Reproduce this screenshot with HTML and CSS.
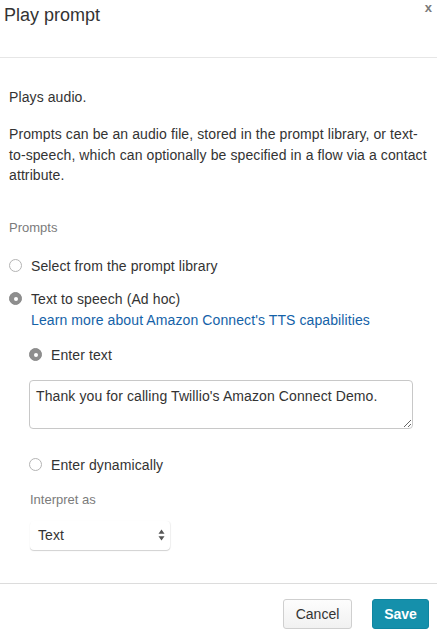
FILE: index.html
```html
<!DOCTYPE html>
<html>
<head>
<meta charset="utf-8">
<link rel="stylesheet" href="styles.css">
</head>
<body>
<div class="panel">
  <header class="header">
    <h1 class="title">Play prompt</h1>
    <span class="close">x</span>
  </header>
  <main class="content">
    <p class="lead">Plays audio.</p>
    <p class="desc">Prompts can be an audio file, stored in the prompt library, or text-to-speech, which can optionally be specified in a flow via a contact attribute.</p>
    <div class="label label-prompts">Prompts</div>
    <div class="radio-row row-library">
      <span class="radio"></span>
      <span class="radio-text">Select from the prompt library</span>
    </div>
    <div class="radio-row row-tts">
      <span class="radio checked"></span>
      <span class="radio-text">Text to speech (Ad hoc)</span>
    </div>
    <a class="link">Learn more about Amazon Connect's TTS capabilities</a>
    <div class="sub">
      <div class="radio-row row-enter">
        <span class="radio checked"></span>
        <span class="radio-text">Enter text</span>
      </div>
      <textarea class="textarea">Thank you for calling Twillio's Amazon Connect Demo.</textarea>
      <div class="radio-row row-dyn">
        <span class="radio"></span>
        <span class="radio-text">Enter dynamically</span>
      </div>
      <div class="label label-interpret">Interpret as</div>
      <div class="select">
        <span class="select-text">Text</span>
        <svg class="select-arrows" width="7" height="12" viewBox="0 0 7 12">
          <path d="M3.5 0.5 L6.5 4.8 L0.5 4.8 Z" fill="#555"/>
          <path d="M3.5 11.5 L6.5 7.2 L0.5 7.2 Z" fill="#555"/>
        </svg>
      </div>
    </div>
  </main>
  <footer class="footer">
    <button class="btn btn-cancel">Cancel</button>
    <button class="btn btn-save">Save</button>
  </footer>
</div>
</body>
</html>
```
FILE: styles.css
```css
* { box-sizing: border-box; }
html, body { margin: 0; padding: 0; background: #fff; }
body {
  font-family: "Liberation Sans", Arial, sans-serif;
  font-size: 14px;
  color: #333;
  width: 437px;
  height: 634px;
  overflow: hidden;
}
.panel { display: flex; flex-direction: column; }
.header {
  height: 58px;
  border-bottom: 1px solid #e6e6e6;
  display: flex;
  justify-content: space-between;
  align-items: flex-start;
}
.title {
  margin: 0;
  padding: 5px 0 0 4px;
  font-size: 18px;
  font-weight: normal;
  line-height: 20px;
  color: #333;
}
.close {
  font-size: 13px;
  font-weight: bold;
  color: #7a7a7a;
  line-height: 13px;
  padding: 1px 5px 0 0;
}
.content {
  padding: 0 9px;
  display: flex;
  flex-direction: column;
  align-items: flex-start;
  letter-spacing: 0.1px;
}
.lead { margin: 29px 0 0; line-height: 20px; }
.desc { margin: 17px 0 0; line-height: 20.5px; }
.label { font-size: 13px; color: #7b7b7b; line-height: 18px; letter-spacing: 0; }
.label-prompts { margin-top: 33px; }
.radio-row { display: flex; align-items: center; line-height: 20px; }
.radio {
  width: 13px;
  height: 13px;
  border-radius: 50%;
  border: 1px solid #b4b4b4;
  background: #fff;
  margin-right: 9px;
  flex: none;
  position: relative;
}
.radio.checked {
  background: #8e8e8e;
  border-color: #8a8a8a;
}
.radio.checked::after {
  content: "";
  position: absolute;
  left: 50%;
  top: 50%;
  width: 4px;
  height: 4px;
  margin: -2px 0 0 -2px;
  border-radius: 50%;
  background: #fff;
}
.row-library { margin-top: 19px; }
.row-tts { margin-top: 13px; }
.link {
  margin: 1px 0 0 22px;
  line-height: 20px;
  color: #1462a8;
  text-decoration: none;
}
.sub { padding-left: 20px; display: flex; flex-direction: column; align-items: flex-start; }
.row-enter { margin-top: 15px; }
.textarea {
  display: block;
  margin-top: 15px;
  width: 384px;
  height: 49px;
  border: 1px solid #c8c8c8;
  border-radius: 4px;
  padding: 6px 6px;
  font-family: "Liberation Sans", Arial, sans-serif;
  font-size: 14px;
  letter-spacing: 0.1px;
  line-height: 18px;
  color: #333;
  resize: both;
  outline: none;
}
.row-dyn { margin-top: 26px; }
.label-interpret { margin-top: 16px; margin-left: 1px; }
.select {
  margin-top: 12px;
  margin-left: 1px;
  width: 140px;
  height: 29px;
  border-radius: 4px;
  background: #fff;
  box-shadow: 0 1px 1px rgba(0,0,0,0.18), 1px 0 1px rgba(0,0,0,0.05);
  display: flex;
  align-items: center;
  justify-content: space-between;
  padding: 0 5px 0 8px;
}
.select-text { font-size: 14px; color: #333; }
.select-arrows { display: block; }
.footer {
  margin-top: 33px;
  border-top: 1px solid #dcdcdc;
  display: flex;
  justify-content: flex-end;
  gap: 20px;
  padding: 15px 8px 0 0;
}
.btn {
  height: 30px;
  border-radius: 3px;
  font-family: "Liberation Sans", Arial, sans-serif;
  font-size: 14px;
  padding: 0;
}
.btn-cancel {
  width: 69px;
  border: 1px solid #cfcfcf;
  background: linear-gradient(#fdfdfd, #f1f1f1);
  color: #333;
}
.btn-save {
  width: 57px;
  border: 1px solid #0f86a1;
  background: #1590ab;
  color: #fff;
  font-weight: bold;
}
```
